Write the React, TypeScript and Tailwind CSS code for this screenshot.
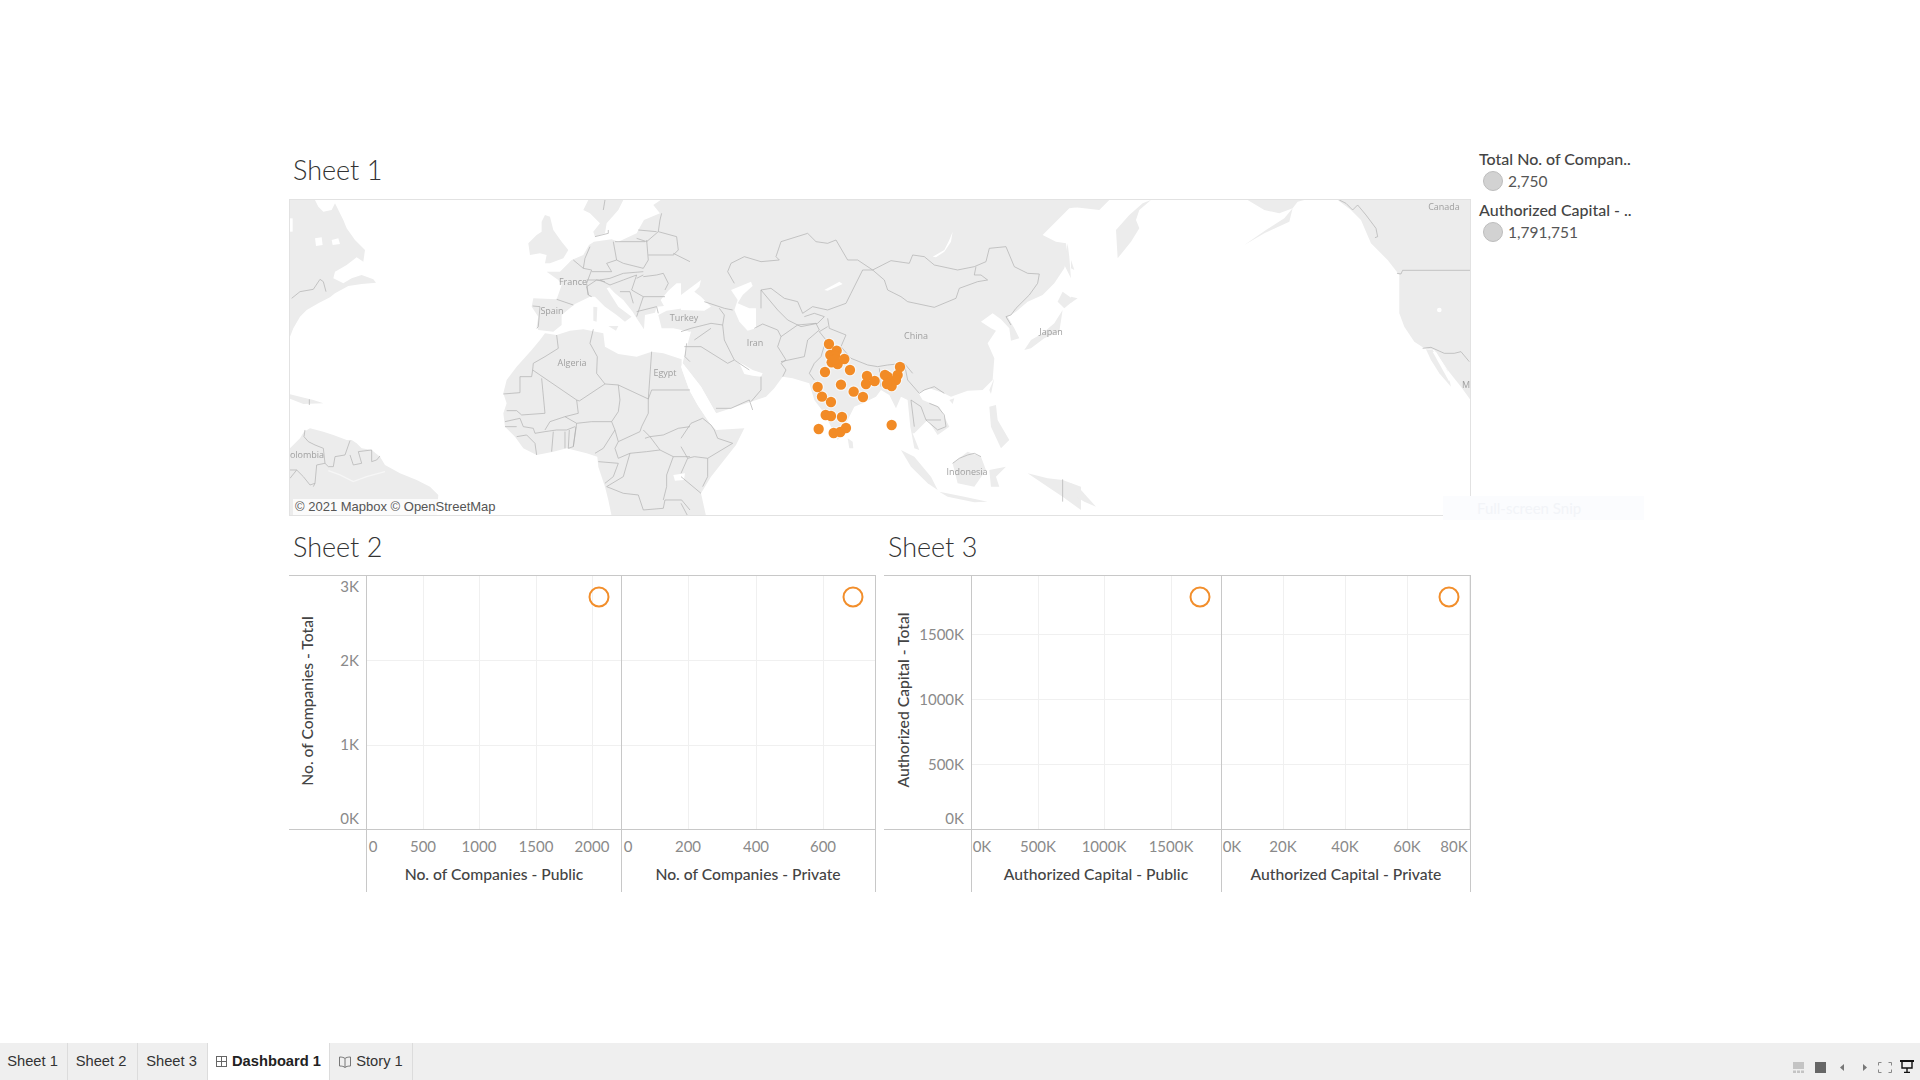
// Dashboard de Tableau: mapa + dois pares de gráficos de dispersão
const tabs = [
  { label: "Sheet 1", w: "w-[68px] pr-[2px]" },
  { label: "Sheet 2", w: "w-[70px] pr-[3px]" },
  { label: "Sheet 3", w: "w-[70px] pr-[2px]" },
];

// --- Mapa: cada grupo usa as coordenadas do recorte a 3x ---
const landA = [
  "0,0 75,0 85,20 100,35 125,30 135,10 160,60 170,85 195,120 225,150 220,185 200,172 170,195 135,215 130,235 160,250 185,235 215,225 250,238 258,248 215,252 175,258 135,280 120,292 85,310 50,330 30,350 10,385 0,410",
  "0,583 30,590 70,600 100,610 40,612 0,596",
  "0,745 30,715 42,695 60,685 100,695 130,705 170,720 185,720 200,730 215,745 245,750 270,770 285,795 330,820 380,840 420,860 445,885 440,948 0,948",
  "720,165 715,130 740,105 755,95 755,65 765,45 780,50 790,90 815,125 835,150 820,175 780,190 765,190 770,165 750,160",
  "880,30 895,0 1000,0 985,30 950,70 945,100 915,110 910,95 930,70 900,40",
  "770,215 810,215 845,180 880,165 897,135 912,125 965,118 985,125 1040,100 1048,85 1062,60 1110,40 1090,15 1112,0 1200,0 1200,250 1160,250 1135,272 1112,300 1122,318 1100,320 1095,338 1065,345 1062,388 1040,355 1028,335 1000,300 975,280 958,262 950,265 985,320 1025,350 1005,365 980,345 945,320 915,290 900,290 855,312 815,345 815,375 790,395 745,390 740,380 745,350 725,320 730,295 800,298 815,255 805,240",
  "1105,345 1130,332 1200,322 1200,395 1150,385 1115,385",
  "910,320 922,322 920,365 910,362",
  "955,378 985,378 978,392",
  "640,580 650,540 680,500 725,450 750,420 765,400 800,405 840,392 880,388 940,400 945,440 985,462 1040,470 1085,455 1120,460 1175,478 1175,948 965,948 955,900 945,860 925,800 922,770 890,760 830,745 790,755 740,765 700,745 675,710 645,680 640,640 650,610",
];

const waterA = [
  "75,115 95,112 98,135 78,138",
  "125,120 145,115 150,132 128,135",
  "0,55 8,55 8,95 0,95",
  "1150,825 1185,820 1182,840 1155,842",
];

const linesA = [
  "45,690 42,710 55,725 75,735 100,745 105,790 115,800 130,800 135,770 165,765 180,722",
  "180,765 190,795 215,790 205,755 245,750 245,785 260,780 270,768",
  "105,790 80,795 75,850 60,855 40,830 20,810 0,810",
  "0,835 20,810",
  "75,850 70,860",
  "58,598 58,615",
  "5,295 30,275 70,268 90,238 100,245 108,275",
  "800,405 805,445 765,470 730,490 728,510 725,530 690,530 690,578 640,582",
  "728,510 860,600 868,603 945,552 985,555 1075,597 1085,570 1200,570",
  "910,388 900,430 922,470 920,520 945,552",
  "1085,455 1075,597",
  "755,535 765,640 695,645 680,632 650,632",
  "860,600 865,640 825,650 780,665 765,690",
  "985,555 990,600 985,635 965,665 975,690 985,725",
  "825,650 860,670 905,665 965,665",
  "1075,597 1075,640 1055,680 1050,695 985,725 975,745 985,775",
  "645,665 690,655 700,680 730,685 735,700",
  "645,680 680,680",
  "680,710 710,705 735,730 740,765",
  "735,700 765,695 800,690 830,690 855,680",
  "790,695 785,755",
  "825,695 825,745",
  "838,690 835,745 850,740 858,680",
  "860,670 850,740",
  "975,690 940,745 915,760",
  "985,775 1020,760 1070,755 1110,750 1080,710 1060,690",
  "1065,715 1080,710 1120,705 1165,685 1200,680",
  "1110,750 1150,770 1200,770",
  "1020,760 1000,830 950,860 1000,880 1045,885 1060,930 1120,925 1125,900 1175,900 1200,930",
  "1150,770 1130,825 1130,860 1120,900",
  "925,785 985,790 970,830 945,850",
  "850,180 880,205 905,210 890,250 895,285 905,290",
  "728,318 750,320 745,380 740,385",
  "800,298 850,315",
  "970,125 980,180 950,190 965,215 905,215",
  "880,205 885,175 900,140",
  "1070,120 1075,180 1060,205 1000,190 980,180",
  "975,125 1065,125",
  "890,240 930,240 960,235 1000,220 1060,215",
  "1040,115 1070,125 1105,95 1110,60 1115,40",
  "1045,90 1100,95",
  "1105,95 1160,110 1165,150 1150,165 1075,165",
  "1150,160 1200,185",
  "1060,230 1100,225 1120,220 1135,250 1125,270",
  "1040,235 1060,225",
  "1060,290 1125,290",
  "930,240 960,255 1000,240 1040,225 1025,270 1060,290 1050,320 1040,350",
  "1040,335 1100,320 1105,340",
  "990,275 1020,275 1030,310",
  "895,285 890,260 920,240 945,245",
  "915,110 955,100 955,90",
  "945,0 940,30",
  "1190,430 1185,470 1200,485",
];

const landB = [
  "0,0 1200,0 1200,20 1165,25 1130,60 1085,105 1125,125 1155,130 1160,170 1150,205 1120,250 1085,285 1040,305 1005,335 980,350 1000,385 1015,415 990,422 985,385 960,358 935,340 900,365 930,385 945,392 920,430 940,475 935,540 905,570 860,572 810,590 785,578 745,565 712,578 725,600 775,620 805,680 770,705 740,660 700,700 695,700 715,750 700,745 688,680 680,600 660,590 645,625 625,585 600,570 585,590 545,610 520,620 490,680 500,685 470,720 430,640 400,600 385,550 335,535 305,530 280,565 255,590 210,605 105,640 60,560 5,490 15,450 30,395 0,388",
  "0,500 25,570 50,615 90,675 105,690 190,685 165,735 90,830 60,880 75,948 0,948",
  "500,715 515,725 517,745 505,745",
  "660,750 700,770 750,830 770,870 740,850 690,800",
  "775,875 850,890 920,905 880,907 800,890",
  "815,790 860,755 900,770 915,810 880,860 830,850",
  "925,810 975,800 945,830 955,860 930,860",
  "1040,820 1100,835 1145,840 1200,860 1200,930 1145,890 1100,860",
  "925,620 945,615 950,660 985,720 960,745 930,680",
  "925,570 940,535 930,582",
  "805,600 820,595 815,612",
  "1030,450 1050,420 1085,400 1120,370 1145,330 1135,395 1090,415 1050,445",
  "1145,275 1180,300 1150,325 1130,305",
  "1160,130 1165,170 1170,235 1150,195",
];

const waterB = [
  "0,285 60,240 55,260 40,275 60,290 90,320 70,332 0,330",
  "150,270 210,245 215,258 185,285 170,310 205,325 225,325 225,385 200,392 175,365 160,330 170,300",
  "755,170 790,150 805,120 815,95 810,125 790,155 765,172",
  "430,270 475,245 485,252 440,272",
  "155,478 190,495 215,510 245,520 240,530 215,527 190,522 175,490",
  "5,490 60,560 105,640 90,675 50,615 25,570 0,500",
];

const linesB = [
  "140,215 150,190 190,170 240,185 295,180 285,170 300,125 380,100 405,125 440,130 465,120 500,180 530,180 575,210",
  "575,210 630,182 685,190 695,165 730,170 760,195 830,210 880,200 915,185 925,145 975,140 1000,200 1040,220 1075,222 1070,250 1045,285 1005,325 990,345 975,350",
  "575,210 610,240 620,270 660,290 680,305 760,322 825,295 835,265 890,245 920,240 900,225 880,225 885,200",
  "140,215 160,250",
  "240,325 240,270 270,265 310,295 350,305 365,340 395,320 440,330 495,310 510,280 530,240 545,210 575,210",
  "240,270 290,330 320,360 360,380 410,370 430,350 400,340 370,350",
  "220,385 245,372 290,390 300,410 290,440 315,480 300,490 315,510 305,530",
  "300,410 350,375 405,370 415,390 380,420 370,470 300,485",
  "440,380 415,395 435,420 420,470 400,490 385,520 400,540",
  "440,355 445,385 495,405 480,440 510,475 560,495 590,500 620,495 670,490 695,520",
  "670,490 680,540 715,580 730,570 760,560 790,580",
  "595,505 600,560",
  "690,600 720,620 735,660 770,690 795,680 790,645 770,620 745,610",
  "735,660 780,660",
  "690,600 700,680",
  "975,350 990,375",
  "815,790 835,775 860,765 880,760 900,770",
  "1145,838 1145,905",
  "0,395 30,385 90,370 125,375 130,345 115,325",
  "125,375 130,420 160,480",
  "40,420 90,385",
  "10,440 60,440 140,490 160,480 205,510",
  "70,305 130,325 155,330",
  "105,625 150,625 205,600 215,630",
  "210,605 240,570 240,530",
  "0,715 30,670 65,655 90,675 100,690 110,715 155,730 80,775 40,770 20,775 0,740",
  "80,775 80,830 65,860",
  "0,820 20,775",
  "0,830 60,880",
  "0,910 20,948",
];

const landC = [
  "0,0 115,0 85,30 0,20",
  "240,0 205,30 195,60 205,85 180,125 140,175 135,90 175,45 215,10",
  "530,0 580,30 625,40 665,25 680,5 700,0",
  "665,25 655,65 580,100 520,135 585,90 640,55",
  "800,0 1203,0 1203,606 1170,560 1130,510 1090,450 1060,445 1030,425 1000,380 985,340 985,225 950,180 900,130 870,60 840,30",
  "0,850 30,870 75,920 40,905 0,880",
  "0,180 10,210 0,205",
  "0,290 20,295 0,308",
];

const linesC = [
  "805,0 825,10 845,30 860,15 885,45 915,85 920,110 912,113",
  "978,220 990,222 995,211 1200,211",
  "1055,445 1080,442 1120,460 1150,460 1170,455 1195,485",
];

const dots = [
  [444, 432], [448, 465], [467, 452], [462, 468], [452, 487], [470, 492], [490, 477], [461, 478],
  [432, 516], [507, 510], [558, 528], [555, 552], [581, 543], [480, 554], [410, 561], [423, 590],
  [450, 606], [518, 575], [546, 591], [434, 645], [450, 648], [483, 651], [413, 687], [458, 699],
  [478, 696], [495, 684], [632, 675], [657, 501], [650, 525], [645, 540], [612, 525], [620, 530],
  [625, 548], [632, 558], [618, 552],
];

const mapLabels = [
  { t: "France", x: 283, y: 81 },
  { t: "Spain", x: 262, y: 110 },
  { t: "Turkey", x: 394, y: 117 },
  { t: "Algeria", x: 282, y: 162 },
  { t: "Egypt", x: 375, y: 172 },
  { t: "Iran", x: 465, y: 142 },
  { t: "China", x: 626, y: 135 },
  { t: "Japan", x: 761, y: 131 },
  { t: "Indonesia", x: 677, y: 271 },
  { t: "Canada", x: 1154, y: 6 },
  { t: "M", x: 1176, y: 184 },
  { t: "olombia", x: 17, y: 254 },
];

function Polys({ items }: { items: string[] }) {
  return (
    <>
      {items.map((p) => (
        <polygon key={p} points={p} />
      ))}
    </>
  );
}

function Borders({ lines }: { lines: string[] }) {
  return (
    <g fill="none" stroke="#b0b0b0" strokeWidth="2.1" strokeLinejoin="round">
      {lines.map((p) => (
        <polyline key={p} points={p} />
      ))}
    </g>
  );
}

function WorldMap() {
  return (
    <div className="relative h-[317px] w-[1182px] border border-[#e2e2e2] bg-white">
      <svg viewBox="0 0 1180 315" className="block h-[315px] w-[1180px] blur-[0.4px]">
        <g fill="#ececec">
          <g transform="scale(0.3333)">
            <Polys items={landA} />
          </g>
          <g transform="translate(391 0) scale(0.3333)">
            <Polys items={landB} />
          </g>
          <g transform="translate(781 0) scale(0.3333)">
            <Polys items={landC} />
          </g>
        </g>
        <g fill="#ffffff">
          <g transform="scale(0.3333)">
            <Polys items={waterA} />
          </g>
          <g transform="translate(391 0) scale(0.3333)">
            <Polys items={waterB} />
          </g>
          <g transform="translate(781 0) scale(0.3333)">
            <polygon points="1065,448 1085,450 1130,512 1140,560 1105,520 1080,480" fill="#ececec" />
            <polygon points="1085,455 1095,455 1140,530 1135,545" />
            <circle cx="1105" cy="330" r="7" />
          </g>
        </g>
        <polyline
          transform="scale(0.3333)"
          points="115,812 150,825 190,845 230,830 285,815"
          fill="none"
          stroke="#f6f6f6"
          strokeWidth="4"
        />
        <g transform="scale(0.3333)">
          <Borders lines={linesA} />
        </g>
        <g transform="translate(391 0) scale(0.3333)">
          <Borders lines={linesB} />
        </g>
        <g transform="translate(781 0) scale(0.3333)">
          <Borders lines={linesC} />
        </g>
        <g className="fill-[#a0a0a0] font-['Open_Sans',sans-serif] text-[9px]" textAnchor="middle">
          {mapLabels.map((l) => (
            <text key={l.t} x={l.x} y={l.y} dominantBaseline="central">
              {l.t}
            </text>
          ))}
        </g>
        {/* halo claro primeiro; os pontos por cima se fundem sem contorno entre eles */}
        <g transform="translate(391 0) scale(0.3333)" fill="#ffffff" fillOpacity="0.55">
          {dots.map(([x, y]) => (
            <circle key={`${x}-${y}`} cx={x} cy={y} r="19" />
          ))}
        </g>
        <g transform="translate(391 0) scale(0.3333)" fill="#f28b26">
          {dots.map(([x, y]) => (
            <circle key={`${x}-${y}`} cx={x} cy={y} r="15.5" />
          ))}
        </g>
      </svg>
      <div className="absolute bottom-0 left-[3px] bg-white/80 px-[2px] font-['Liberation_Sans',sans-serif] text-[13px] leading-[16px] text-[#555555]">
        © 2021 Mapbox © OpenStreetMap
      </div>
    </div>
  );
}

// --- Gráficos ---
type Tick = { label: string; x: number };
type Pane = { x0: number; title: string; titleX: number; ticks: Tick[]; grid: number[]; cx: number };
type ChartProps = {
  yTitle: string;
  yTitleX: number;
  yTitleY: number;
  labelRight: number;
  yTicks: { label: string; y: number }[];
  gridY: number[];
  panes: Pane[];
};

function Chart({ yTitle, yTitleX, yTitleY, labelRight, yTicks, gridY, panes }: ChartProps) {
  const first = panes[0].x0;
  return (
    <svg viewBox="0 0 587 318" className="block h-[318px] w-[587px] font-['Lato',sans-serif]">
      <g stroke="#f0f0f0" shapeRendering="crispEdges">
        {gridY.map((y) => (
          <line key={y} x1={first} x2="586" y1={y + 0.5} y2={y + 0.5} />
        ))}
        {panes.flatMap((p) =>
          p.grid.map((x) => <line key={x} x1={x + 0.5} x2={x + 0.5} y1="1" y2="254" />)
        )}
      </g>
      <g stroke="#c8c8c8" shapeRendering="crispEdges">
        <line x1="0" x2="587" y1="0.5" y2="0.5" />
        <line x1="0" x2="587" y1="254.5" y2="254.5" />
        {panes.map((p) => (
          <line key={p.x0} x1={p.x0 + 0.5} x2={p.x0 + 0.5} y1="0" y2="317" />
        ))}
        <line x1="586.5" x2="586.5" y1="0" y2="317" />
      </g>
      <g className="fill-[#8a8a8a] text-[15px]">
        {yTicks.map((t) => (
          <text key={t.label} x={labelRight} y={t.y} textAnchor="end" dominantBaseline="central">
            {t.label}
          </text>
        ))}
        {panes.flatMap((p) =>
          p.ticks.map((t) => (
            <text key={`${p.x0}-${t.label}`} x={t.x} y="271" textAnchor="middle" dominantBaseline="central">
              {t.label}
            </text>
          ))
        )}
      </g>
      <g className="fill-[#444444] text-[15.7px] font-medium">
        <text
          x={yTitleX}
          y={yTitleY}
          textAnchor="middle"
          dominantBaseline="central"
          transform={`rotate(-90 ${yTitleX} ${yTitleY})`}
        >
          {yTitle}
        </text>
        {panes.map((p) => (
          <text key={p.title} x={p.titleX} y="299" textAnchor="middle" dominantBaseline="central">
            {p.title}
          </text>
        ))}
      </g>
      {panes.map((p) => (
        <circle key={p.cx} cx={p.cx} cy="22" r="9.5" fill="none" stroke="#f28e2b" strokeWidth="2" />
      ))}
    </svg>
  );
}

const chart2: ChartProps = {
  yTitle: "No. of Companies - Total",
  yTitleX: 18,
  yTitleY: 126,
  labelRight: 70,
  yTicks: [
    { label: "3K", y: 11 },
    { label: "2K", y: 85 },
    { label: "1K", y: 169 },
    { label: "0K", y: 243 },
  ],
  gridY: [85, 170],
  panes: [
    {
      x0: 77,
      title: "No. of Companies - Public",
      titleX: 205,
      cx: 310,
      grid: [134, 190, 247, 303],
      ticks: [
        { label: "0", x: 84 },
        { label: "500", x: 134 },
        { label: "1000", x: 190 },
        { label: "1500", x: 247 },
        { label: "2000", x: 303 },
      ],
    },
    {
      x0: 332,
      title: "No. of Companies - Private",
      titleX: 459,
      cx: 564,
      grid: [399, 467, 534],
      ticks: [
        { label: "0", x: 339 },
        { label: "200", x: 399 },
        { label: "400", x: 467 },
        { label: "600", x: 534 },
      ],
    },
  ],
};

const chart3: ChartProps = {
  yTitle: "Authorized Capital - Total",
  yTitleX: 19,
  yTitleY: 125,
  labelRight: 80,
  yTicks: [
    { label: "1500K", y: 59 },
    { label: "1000K", y: 124 },
    { label: "500K", y: 189 },
    { label: "0K", y: 243 },
  ],
  gridY: [59, 124, 189],
  panes: [
    {
      x0: 87,
      title: "Authorized Capital - Public",
      titleX: 212,
      cx: 316,
      grid: [154, 220, 287],
      ticks: [
        { label: "0K", x: 98 },
        { label: "500K", x: 154 },
        { label: "1000K", x: 220 },
        { label: "1500K", x: 287 },
      ],
    },
    {
      x0: 337,
      title: "Authorized Capital - Private",
      titleX: 462,
      cx: 565,
      grid: [399, 461, 523, 585],
      ticks: [
        { label: "0K", x: 348 },
        { label: "20K", x: 399 },
        { label: "40K", x: 461 },
        { label: "60K", x: 523 },
        { label: "80K", x: 570 },
      ],
    },
  ],
};

function SheetTitle({ children }: { children: string }) {
  return <h2 className="pl-[4px] font-['Lato',sans-serif] text-[27px] font-light leading-[32px] text-[#333333]">{children}</h2>;
}

function LegendItem({ title, value }: { title: string; value: string }) {
  return (
    <div className="mb-[7px]">
      <div className="text-[16px] font-medium leading-[22px] text-[#444444]">{title}</div>
      <div className="flex h-[22px] items-center">
        <span className="ml-[4px] mr-[5px] h-[20px] w-[20px] rounded-full border border-[#bdbdbd] bg-[#d2d2d2]" />
        <span className="text-[15.5px] leading-[22px] text-[#555555]">{value}</span>
      </div>
    </div>
  );
}

export default function App() {
  return (
    <div className="relative flex h-screen flex-col overflow-hidden bg-white font-['Lato',sans-serif]">
      <main className="flex flex-1 gap-[8px] pl-[289px] pt-[149px]">
        <div className="w-[1182px]">
          <div className="flex h-[50px] items-start pt-[5px]">
            <SheetTitle>Sheet 1</SheetTitle>
          </div>
          <WorldMap />
          <div className="mt-[14px] flex gap-[8px]">
            <section className="w-[587px]">
              <div className="h-[45px] pt-[1px]">
                <SheetTitle>Sheet 2</SheetTitle>
              </div>
              <Chart {...chart2} />
            </section>
            <section className="w-[587px]">
              <div className="h-[45px] pt-[1px]">
                <SheetTitle>Sheet 3</SheetTitle>
              </div>
              <Chart {...chart3} />
            </section>
          </div>
        </div>
        <aside className="-mt-[1px]">
          <LegendItem title="Total No. of Compan.." value="2,750" />
          <LegendItem title="Authorized Capital - .." value="1,791,751" />
        </aside>
      </main>

      {/* marca quase invisível do recorte de tela */}
      <div className="absolute left-[1443px] top-[496px] flex h-[24px] w-[201px] items-center bg-[#fbfcfe] pl-[34px] text-[15px] text-[#f2f4f8]">
        Full-screen Snip
      </div>

      <footer className="flex h-[37px] bg-[#efefef] font-['Liberation_Sans',sans-serif] text-[14.7px] text-[#333333]">
        {tabs.map((t) => (
          <div key={t.label} className={`flex items-center justify-center border-r border-[#dcdcdc] ${t.w}`}>
            {t.label}
          </div>
        ))}
        <div className="flex w-[122px] items-center justify-center gap-[5px] border-r border-[#dcdcdc] bg-white font-bold text-[#222222]">
          <svg viewBox="0 0 11 11" className="h-[11px] w-[11px]" fill="none" stroke="#666666">
            <rect x="0.5" y="0.5" width="10" height="10" />
            <path d="M5.5 0.5V10.5M0.5 5.5H10.5" />
          </svg>
          Dashboard 1
        </div>
        <div className="flex w-[83px] items-center justify-center gap-[5px] border-r border-[#dcdcdc]">
          <svg viewBox="0 0 12 12" className="h-[12px] w-[12px]" fill="none" stroke="#777777">
            <path d="M6 2.5C5 1.5 3 1 0.5 1V10C3 10 5 10.5 6 11.5C7 10.5 9 10 11.5 10V1C9 1 7 1.5 6 2.5ZM6 2.5V11.5" />
          </svg>
          Story 1
        </div>
        <div className="ml-auto flex items-end gap-[11px] pb-[7px] pr-[6px]">
          <svg viewBox="0 0 11 11" className="h-[11px] w-[11px]">
            <rect width="11" height="7" fill="#c4c4c4" />
            <rect y="8.5" width="3" height="2.5" fill="#c4c4c4" />
            <rect x="4" y="8.5" width="3" height="2.5" fill="#c4c4c4" />
            <rect x="8" y="8.5" width="3" height="2.5" fill="#c4c4c4" />
          </svg>
          <div className="h-[11px] w-[11px] bg-[#666666]" />
          <svg viewBox="0 0 11 11" className="h-[11px] w-[11px]">
            <path d="M7 2V9L3 5.5Z" fill="#777777" />
          </svg>
          <svg viewBox="0 0 11 11" className="h-[11px] w-[11px]">
            <path d="M4 2V9L8 5.5Z" fill="#777777" />
          </svg>
          <svg viewBox="0 0 14 11" className="-ml-[3px] h-[11px] w-[14px]" fill="none" stroke="#888888">
            <path d="M0.5 3.5V0.5H3.5M10.5 0.5H13.5V3.5M13.5 7.5V10.5H10.5M3.5 10.5H0.5V7.5" />
          </svg>
          <svg viewBox="0 0 14 13" className="-ml-[3px] h-[13px] w-[14px]" fill="none" stroke="#111111" strokeWidth="1.4">
            <path d="M0 1H14" strokeWidth="2" />
            <path d="M2 1V8H12V1M7 8V12M4 12.4H10" />
          </svg>
        </div>
      </footer>
    </div>
  );
}
